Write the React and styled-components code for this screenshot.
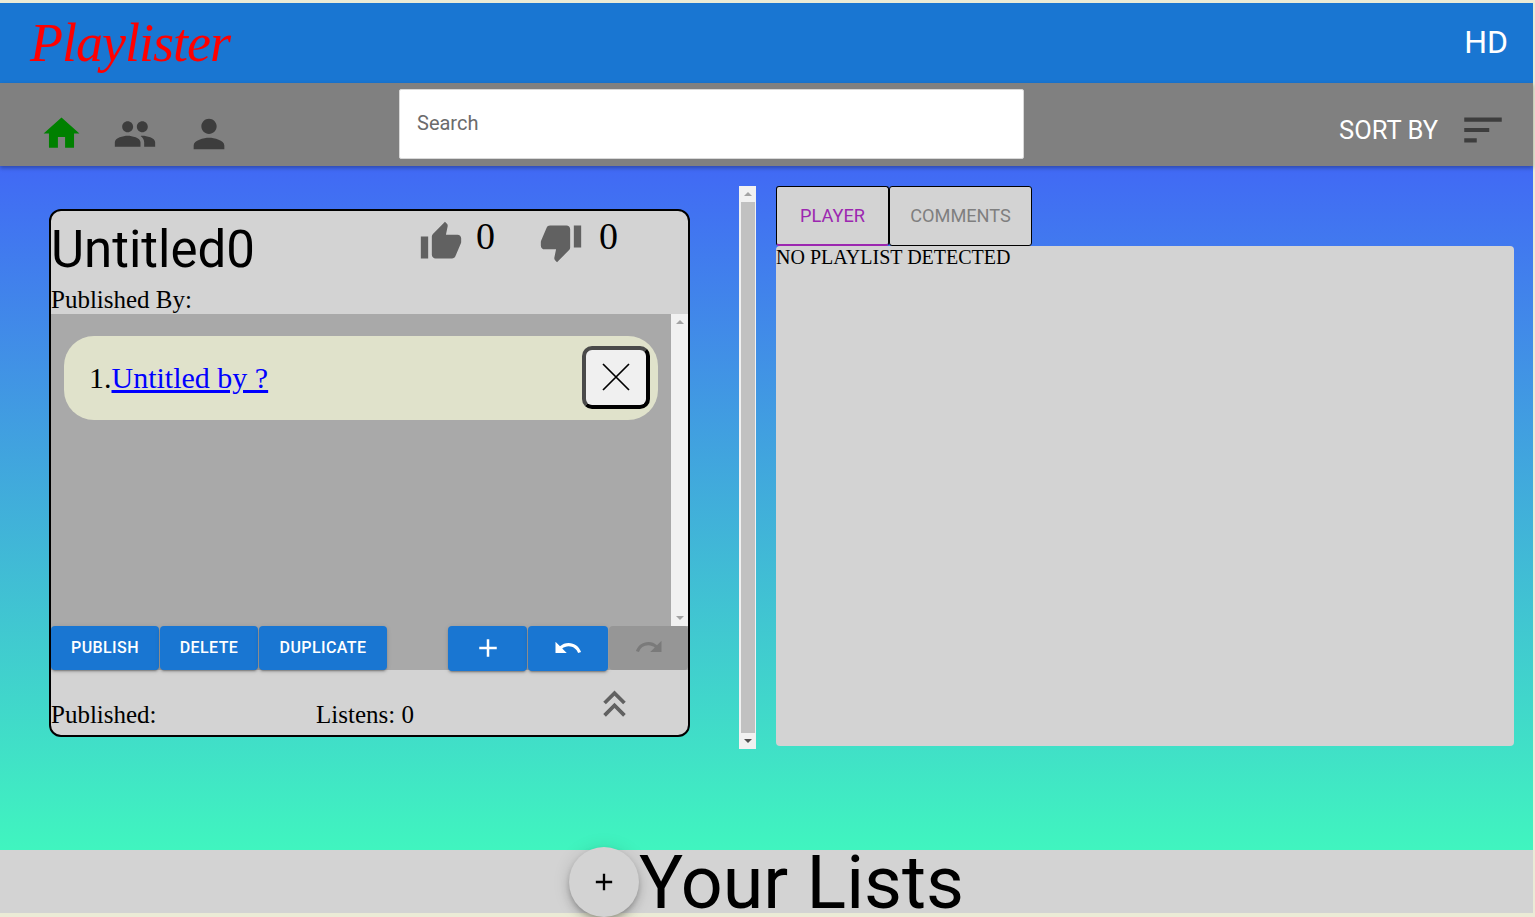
import React from 'react';
import styled, { createGlobalStyle } from 'styled-components';
import {
  MdHome, MdPeople, MdPerson, MdSort, MdThumbUp, MdThumbDown,
  MdAdd, MdUndo, MdRedo, MdKeyboardDoubleArrowUp,
} from 'react-icons/md';

const GlobalStyle = createGlobalStyle`
  html, body {
    margin: 0;
    height: 917px;
    overflow: hidden;
    background: #ebebd6;
    font-family: "Liberation Serif", serif;
  }
  * { box-sizing: border-box; }
`;

const Page = styled.div`
  width: 1533px;
  padding-top: 3px;
  display: flex;
  flex-direction: column;
`;

const Banner = styled.header`
  height: 80px;
  background: #1976d2;
  display: flex;
  align-items: center;
  justify-content: space-between;
  padding: 0 25px 0 30px;
`;

const Logo = styled.div`
  font-family: "Liberation Serif", serif;
  font-style: italic;
  font-size: 54px;
  line-height: 80px;
  color: #f00;
  letter-spacing: -1px;
`;

const Initials = styled.div`
  font-family: Roboto, sans-serif;
  font-size: 32px;
  color: #fff;
  margin-bottom: 2px;
`;

const Toolbar = styled.div`
  height: 83px;
  background: #808080;
  display: flex;
  align-items: center;
  justify-content: space-between;
  padding: 0 31px 0 40px;
  box-shadow: 0 2px 4px rgba(0, 0, 0, 0.3);
  position: relative;
`;

const NavIcons = styled.div`
  width: 359px;
  display: flex;
  align-items: center;
  gap: 29.5px;
  padding-top: 18px;
`;

const NavIcon = styled.span`
  display: flex;
  color: ${(p) => (p.$active ? '#008000' : '#3d3d3d')};
`;

const SearchBox = styled.div`
  width: 625px;
  height: 70px;
  margin-bottom: 1px;
  background: #fff;
  border: 1px solid #d8d8d8;
  border-radius: 2px;
  display: flex;
  align-items: center;
  padding: 0 0 2px 17px;
  font-family: Roboto, sans-serif;
  font-size: 20px;
  color: #6b6b6b;
`;

const SortArea = styled.div`
  flex: 1;
  display: flex;
  justify-content: flex-end;
  align-items: center;
  gap: 20px;
  padding-top: 11px;
  font-family: Roboto, sans-serif;
  font-size: 25.5px;
  color: #fff;
`;

const SortIcon = styled.span`
  display: flex;
  color: #3d3d3d;
  margin-right: -6px;
`;

const Main = styled.main`
  height: 684px;
  background: linear-gradient(#4169f5, #40f5bf);
  display: flex;
  padding: 20px 19px 0 49px;
`;

const Card = styled.section`
  width: 641px;
  height: 528px;
  margin-top: 23px;
  background: #d3d3d3;
  border: 2px solid #000;
  border-radius: 12px;
  display: flex;
  flex-direction: column;
  overflow: hidden;
`;

const CardHead = styled.div`
  height: 60px;
  display: flex;
`;

const Title = styled.div`
  width: 368px;
  padding-top: 1px;
  font-family: Roboto, sans-serif;
  font-size: 51px;
  line-height: 76px;
  color: #000;
`;

const Vote = styled.div`
  width: 120px;
  display: flex;
  align-items: flex-start;
  gap: ${(p) => p.$gap}px;
  padding-top: 9px;
  font-size: 38px;
  line-height: 32px;
  color: #000;
`;

const VoteIcon = styled.span`
  display: flex;
  color: #616161;
`;

const Publisher = styled.div`
  height: 43px;
  padding-top: 15px;
  font-size: 25px;
  line-height: 28px;
  color: #000;
`;

const ListArea = styled.div`
  height: 312px;
  display: flex;
  background: #a9a9a9;
`;

const SongList = styled.div`
  flex: 1;
  padding: 22px 13px 0;
`;

const SongRow = styled.div`
  height: 84px;
  background: #e0e2cb;
  border-radius: 30px;
  display: flex;
  align-items: center;
  justify-content: space-between;
  padding: 0 8px 0 25px;
  font-size: 30px;
  color: #000;
`;

const SongLink = styled.a`
  color: #00f;
  text-decoration: underline;
`;

const RemoveButton = styled.button`
  width: 68px;
  height: 63px;
  margin-bottom: 2px;
  padding: 0;
  background: #f0f0f0;
  border: 4px solid #000;
  border-top-color: #4a4a4a;
  border-left-color: #4a4a4a;
  border-radius: 10px;
  display: flex;
  align-items: center;
  justify-content: center;
  color: #000;
`;

const Scrollbar = styled.div`
  width: ${(p) => p.$width || 17}px;
  height: ${(p) => p.$height ? `${p.$height}px` : '100%'};
  background: #f1f1f1;
  display: flex;
  flex-direction: column;
  align-items: center;
  justify-content: space-between;
  padding: 6px 0;
  flex-shrink: 0;
`;

const ScrollThumb = styled.div`
  flex: 1;
  width: 14px;
  margin: 6px 0;
  background: #c1c1c1;
`;

const Arrow = styled.div`
  width: 0;
  height: 0;
  border-left: 4px solid transparent;
  border-right: 4px solid transparent;
  ${(p) => (p.$down ? 'border-top' : 'border-bottom')}: 4px solid ${(p) => p.$color};
`;

const ActionRow = styled.div`
  height: 44px;
  display: flex;
  background: #a9a9a9;
`;

const ActionGroup = styled.div`
  display: flex;
  gap: 1px;
  margin-left: ${(p) => p.$offset || 0}px;
`;

const ActionButton = styled.button`
  width: ${(p) => p.$width}px;
  height: ${(p) => p.$tall ? 45 : 44}px;
  padding: 0 0 2px;
  border: none;
  border-radius: 4px;
  background: ${(p) => (p.disabled ? '#969696' : '#1976d2')};
  color: ${(p) => (p.disabled ? '#7a7a7a' : '#fff')};
  font-family: Roboto, sans-serif;
  font-weight: 500;
  font-size: 16px;
  letter-spacing: 0.4px;
  display: flex;
  align-items: center;
  justify-content: center;
  box-shadow: ${(p) => (p.disabled ? 'none' : '0 3px 1px -2px rgba(0,0,0,.2), 0 2px 2px rgba(0,0,0,.14), 0 1px 5px rgba(0,0,0,.12)')};
`;

const CardFoot = styled.div`
  flex: 1;
  display: flex;
  font-size: 25px;
  color: #000;
`;

const FootText = styled.div`
  width: ${(p) => p.$width}px;
  padding-top: 30px;
  line-height: 30px;
`;

const Collapse = styled.span`
  display: flex;
  color: #616161;
  margin: 11px 0 0 -22px;
`;

const PageScroll = styled(Scrollbar)`
  margin-left: 49px;
`;

const RightColumn = styled.div`
  width: 738px;
  margin-left: 20px;
  display: flex;
  flex-direction: column;
`;

const Tabs = styled.div`
  height: 60px;
  display: flex;
`;

const Tab = styled.div`
  width: ${(p) => p.$width}px;
  background: #d3d3d3;
  border: 1px solid #000;
  border-radius: 3px;
  display: flex;
  align-items: center;
  justify-content: center;
  padding-bottom: ${(p) => (p.$active ? 0 : 2)}px;
  font-family: Roboto, sans-serif;
  font-size: 18.2px;
  color: ${(p) => (p.$active ? '#9c27b0' : '#7f7f7f')};
  ${(p) => p.$active && 'border-bottom: 2px solid #9c27b0;'}
`;

const PlayerPanel = styled.div`
  height: 500px;
  background: #d3d3d3;
  border-radius: 4px;
  font-size: 20px;
  line-height: 23px;
  color: #000;
`;

const Footer = styled.footer`
  height: 63px;
  background: #d3d3d3;
  display: flex;
  align-items: center;
  justify-content: center;
`;

const AddListButton = styled.button`
  width: 70px;
  height: 70px;
  padding: 0;
  border: none;
  border-radius: 50%;
  background: #d3d3d3;
  color: #000;
  display: flex;
  align-items: center;
  justify-content: center;
  flex-shrink: 0;
  box-shadow: 0 3px 5px -1px rgba(0,0,0,.2), 0 6px 10px rgba(0,0,0,.14), 0 1px 18px rgba(0,0,0,.12);
`;

const FooterTitle = styled.div`
  padding-top: 3px;
  font-family: Roboto, sans-serif;
  font-size: 73.6px;
  line-height: 60px;
  color: #000;
`;

const App = () => {
  return (
    <Page>
      <GlobalStyle />
      <Banner>
        <Logo>Playlister</Logo>
        <Initials>HD</Initials>
      </Banner>
      <Toolbar>
        <NavIcons>
          <NavIcon $active><MdHome size={43} /></NavIcon>
          <NavIcon><MdPeople size={44} /></NavIcon>
          <NavIcon><MdPerson size={46} /></NavIcon>
        </NavIcons>
        <SearchBox>Search</SearchBox>
        <SortArea>
          SORT BY
          <SortIcon><MdSort size={50} /></SortIcon>
        </SortArea>
      </Toolbar>
      <Main>
        <Card>
          <CardHead>
            <Title>Untitled0</Title>
            <Vote $gap={13}>
              <VoteIcon><MdThumbUp size={44} /></VoteIcon>0
            </Vote>
            <Vote $gap={16}>
              <VoteIcon><MdThumbDown size={44} /></VoteIcon>0
            </Vote>
          </CardHead>
          <Publisher>Published By:</Publisher>
          <ListArea>
            <SongList>
              <SongRow>
                <span>1.<SongLink href="#">Untitled by ?</SongLink></span>
                <RemoveButton aria-label="Remove">
                  <svg width="28" height="28" viewBox="0 0 28 28">
                    <path d="M1 1 L27 27 M27 1 L1 27" stroke="#000" strokeWidth="1.7" fill="none" />
                  </svg>
                </RemoveButton>
              </SongRow>
            </SongList>
            <Scrollbar>
              <Arrow $color="#a3a3a3" />
              <Arrow $down $color="#a3a3a3" />
            </Scrollbar>
          </ListArea>
          <ActionRow>
            <ActionGroup>
              <ActionButton $width={108}>PUBLISH</ActionButton>
              <ActionButton $width={98}>DELETE</ActionButton>
              <ActionButton $width={128}>DUPLICATE</ActionButton>
            </ActionGroup>
            <ActionGroup $offset={61}>
              <ActionButton $width={79} $tall aria-label="Add"><MdAdd size={30} /></ActionButton>
              <ActionButton $width={80} $tall aria-label="Undo"><MdUndo size={30} /></ActionButton>
              <ActionButton $width={79} disabled aria-label="Redo"><MdRedo size={30} /></ActionButton>
            </ActionGroup>
          </ActionRow>
          <CardFoot>
            <FootText $width={265}>Published:</FootText>
            <FootText $width={298}>Listens: 0</FootText>
            <Collapse><MdKeyboardDoubleArrowUp size={45} /></Collapse>
          </CardFoot>
        </Card>
        <PageScroll $height={563}>
          <Arrow $color="#a3a3a3" />
          <ScrollThumb />
          <Arrow $down $color="#505050" />
        </PageScroll>
        <RightColumn>
          <Tabs>
            <Tab $active $width={113}>PLAYER</Tab>
            <Tab $width={143}>COMMENTS</Tab>
          </Tabs>
          <PlayerPanel>NO PLAYLIST DETECTED</PlayerPanel>
        </RightColumn>
      </Main>
      <Footer>
        <AddListButton aria-label="Add list"><MdAdd size={28} /></AddListButton>
        <FooterTitle>Your Lists</FooterTitle>
      </Footer>
    </Page>
  );
};

export default App;
